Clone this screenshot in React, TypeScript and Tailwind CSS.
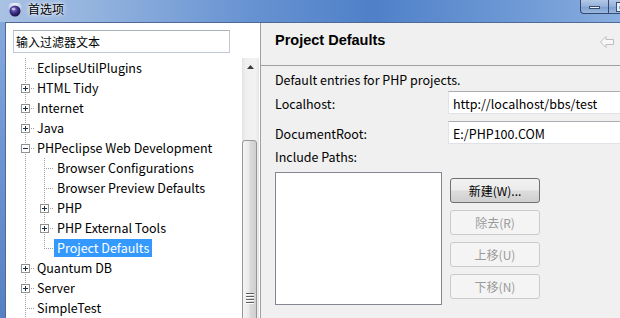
import React from "react";

type Kind = "leaf" | "plus" | "minus" | "pass" | "last";

function Connector({ kind, width }: { kind: Kind; width: number }) {
  const c = 10.5;
  const dot = "#a0a0a0";
  return (
    <svg width={width} height={20} className="block shrink-0" shapeRendering="crispEdges">
      <line x1={c} y1={0} x2={c} y2={kind === "last" ? 11 : 20} stroke={dot} strokeDasharray="1 1" />
      {(kind === "leaf" || kind === "last") && (
        <line x1={12} y1={c} x2={width} y2={c} stroke={dot} strokeDasharray="1 1" />
      )}
      {(kind === "plus" || kind === "minus") && (
        <>
          <line x1={16} y1={c} x2={width} y2={c} stroke={dot} strokeDasharray="1 1" />
          <rect x={6.5} y={6.5} width={8} height={8} fill="#ffffff" stroke="#919191" />
          <line x1={8} y1={c} x2={13} y2={c} stroke="#1c2f4a" />
          {kind === "plus" && <line x1={c} y1={8} x2={c} y2={13} stroke="#1c2f4a" />}
        </>
      )}
    </svg>
  );
}

const rows: { depth: 0 | 1; kind: Kind; label: string; selected?: boolean }[] = [
  { depth: 0, kind: "leaf", label: "EclipseUtilPlugins" },
  { depth: 0, kind: "plus", label: "HTML Tidy" },
  { depth: 0, kind: "plus", label: "Internet" },
  { depth: 0, kind: "plus", label: "Java" },
  { depth: 0, kind: "minus", label: "PHPeclipse Web Development" },
  { depth: 1, kind: "leaf", label: "Browser Configurations" },
  { depth: 1, kind: "leaf", label: "Browser Preview Defaults" },
  { depth: 1, kind: "plus", label: "PHP" },
  { depth: 1, kind: "plus", label: "PHP External Tools" },
  { depth: 1, kind: "last", label: "Project Defaults", selected: true },
  { depth: 0, kind: "plus", label: "Quantum DB" },
  { depth: 0, kind: "plus", label: "Server" },
  { depth: 0, kind: "leaf", label: "SimpleTest" },
];

function Btn({ label, primary }: { label: string; primary?: boolean }) {
  return (
    <div
      className={
        primary
          ? "flex h-[25px] w-[90px] items-center justify-center rounded-[3px] border border-[#707070] bg-[linear-gradient(180deg,#f2f2f2_0%,#ebebeb_48%,#dddddd_52%,#cfcfcf_100%)] text-[12px] text-black"
          : "flex h-[25px] w-[90px] items-center justify-center rounded-[3px] border border-[#c9cbcd] bg-[#f4f4f4] text-[12px] text-[#9a9a9a]"
      }
    >
      {label}
    </div>
  );
}

export default function App() {
  return (
    <div className="relative flex h-[318px] w-[620px] flex-col overflow-hidden font-['Noto_Sans_CJK_SC',sans-serif] text-[12.5px] text-black">
      {/* title bar */}
      <div className="flex h-[22px] shrink-0 items-start bg-[linear-gradient(90deg,#a9c1e3_0%,#93b3de_15%,#6893d2_40%,#4f80c8_60%,#709bd6_85%,#8aaee0_100%)]">
        <svg className="ml-[8px] mt-[3px] shrink-0" width="14" height="14" viewBox="0 0 14 14">
          <defs>
            <radialGradient id="sph" cx="40%" cy="35%" r="65%">
              <stop offset="0%" stopColor="#8c7fd0" />
              <stop offset="55%" stopColor="#3d2d86" />
              <stop offset="100%" stopColor="#1a1240" />
            </radialGradient>
            <radialGradient id="halo" cx="50%" cy="30%" r="60%">
              <stop offset="0%" stopColor="#ffffff" stopOpacity="0.9" />
              <stop offset="100%" stopColor="#ffffff" stopOpacity="0" />
            </radialGradient>
          </defs>
          <circle cx="7" cy="5" r="7" fill="url(#halo)" />
          <circle cx="7" cy="8" r="5.5" fill="url(#sph)" />
          <ellipse cx="5.5" cy="6" rx="2" ry="1.2" fill="#ffffff" opacity="0.55" />
        </svg>
        <span className="ml-[6px] mt-[1px] text-[12px] leading-[16px] text-black [text-shadow:0_0_6px_#ffffff,0_0_3px_#ffffff]">
          首选项
        </span>
        <div className="ml-auto mr-[-16px] flex shrink-0">
          <div className="flex h-[14px] w-[29px] items-center justify-center rounded-bl-[4px] border border-t-0 border-[#34496d] bg-[linear-gradient(180deg,#b3c8e6_0%,#93b0da_50%,#7b9dd0_51%,#9bb8e0_100%)]">
            <div className="mt-[2px] h-[3px] w-[11px] border border-[#3a4f70] bg-[#e8eef7]" />
          </div>
          <div className="flex h-[14px] w-[27px] items-center justify-center border border-l-0 border-t-0 border-[#34496d] bg-[linear-gradient(180deg,#b3c8e6_0%,#93b0da_50%,#7b9dd0_51%,#9bb8e0_100%)]">
            <div className="h-[8px] w-[10px] border-2 border-t-[3px] border-[#e8eef7] outline outline-1 outline-[#3a4f70]" />
          </div>
        </div>
      </div>

      {/* body */}
      <div className="flex min-h-0 flex-1">
        <div className="w-[5px] shrink-0 bg-[linear-gradient(180deg,#86a9dc_0%,#6f96d4_40%,#5780c4_100%)]" />
        <div className="flex min-w-0 flex-1 border-l border-t border-[#4e6b98]">
          {/* left pane */}
          <div className="flex w-[254px] shrink-0 flex-col bg-white">
            <div className="ml-[7px] mt-[7px] h-[23px] w-[217px] shrink-0 border border-[#c3c9d2] border-t-[#abb1ba] pl-[2px] text-[12px] leading-[21px]">
              输入过滤器文本
            </div>
            <div className="mt-[5px] flex min-h-0 flex-1">
              <div className="min-w-0 flex-1 overflow-hidden pl-[9px]">
                {rows.map((r) => (
                  <div key={r.label} className="flex h-[20px] items-center">
                    <Connector kind={r.depth === 0 ? r.kind : "pass"} width={19} />
                    {r.depth === 1 && <Connector kind={r.kind} width={20} />}
                    <span
                      className={
                        r.selected
                          ? "h-[18px] whitespace-nowrap bg-[#3399ff] px-[3px] leading-[18px] text-white"
                          : "h-[18px] whitespace-nowrap px-[3px] leading-[18px] text-black"
                      }
                    >
                      {r.label}
                    </span>
                  </div>
                ))}
              </div>
              {/* scrollbar */}
              <div className="mr-[1px] flex w-[17px] shrink-0 flex-col bg-[linear-gradient(90deg,#e2e2e2_0%,#efefef_20%,#f2f2f2_80%,#e6e6e6_100%)]">
                <div className="flex h-[17px] shrink-0 items-center justify-center">
                  <svg width="7" height="4" viewBox="0 0 7 4">
                    <path d="M3.5 0 L7 4 L0 4 Z" fill="#3c3c3c" />
                  </svg>
                </div>
                <div className="ml-0 mt-[65px] flex h-[316px] w-[15px] shrink-0 justify-center rounded-[3px] border border-[#969696] bg-[linear-gradient(90deg,#f4f4f4_0%,#e9e9e9_45%,#dadada_55%,#cfcfcf_100%)] pt-[152px]">
                  <svg width="8" height="11" viewBox="0 0 8 11" shapeRendering="crispEdges">
                    <rect x="0" y="0" width="8" height="1" fill="#5e5e5e" />
                    <rect x="0" y="1" width="8" height="1" fill="#ffffff" />
                    <rect x="0" y="3" width="8" height="1" fill="#5e5e5e" />
                    <rect x="0" y="4" width="8" height="1" fill="#ffffff" />
                    <rect x="0" y="6" width="8" height="1" fill="#5e5e5e" />
                    <rect x="0" y="7" width="8" height="1" fill="#ffffff" />
                    <rect x="0" y="9" width="8" height="1" fill="#5e5e5e" />
                    <rect x="0" y="10" width="8" height="1" fill="#ffffff" />
                  </svg>
                </div>
              </div>
            </div>
          </div>

          {/* right pane */}
          <div className="flex min-w-0 flex-1 flex-col border-l border-[#a0a0a0] bg-[#f0f0f0]">
            <div className="flex h-[43px] shrink-0 items-start justify-between border-b border-[#a0a0a0] pl-[14px] pr-[6px] pt-[9px]">
              <span className="font-['Liberation_Sans',Arial,sans-serif] text-[14.5px] font-bold leading-[16px] text-black">
                Project Defaults
              </span>
              <svg className="mt-[4px]" width="14" height="12" viewBox="0 0 14 12">
                <path d="M0.5 6 L6 0.5 L6 3.5 L13.5 3.5 L13.5 8.5 L6 8.5 L6 11.5 Z" fill="#f7f7f7" stroke="#bdbdbd" strokeLinejoin="round" />
              </svg>
            </div>
            <div className="flex flex-col pl-[14px] pt-[6px]">
              <div className="leading-[16px]">Default entries for PHP projects.</div>
              <div className="mt-[3px] flex h-[23px] items-center">
                <span className="w-[173px] shrink-0 pt-[2px] leading-[16px]">Localhost:</span>
                <div className="h-[23px] w-[200px] shrink-0 border border-[#dfe3e8] border-t-[#abadb3] bg-white pl-[4px] pt-[1px] leading-[21px]">
                  http://localhost/bbs/test
                </div>
              </div>
              <div className="mt-[7px] flex h-[23px] items-center">
                <span className="w-[173px] shrink-0 pt-[2px] leading-[16px]">DocumentRoot:</span>
                <div className="h-[23px] w-[200px] shrink-0 border border-[#dfe3e8] border-t-[#abadb3] bg-white pl-[4px] pt-[1px] leading-[21px]">
                  E:/PHP100.COM
                </div>
              </div>
              <div className="mt-[5px] leading-[16px]">Include Paths:</div>
              <div className="mt-[7px] flex items-start">
                <div className="h-[133px] w-[167px] shrink-0 border border-[#828790] bg-white" />
                <div className="ml-[8px] mt-[6px] flex flex-col gap-[7px]">
                  <Btn label="新建(W)..." primary />
                  <Btn label="除去(R)" />
                  <Btn label="上移(U)" />
                  <Btn label="下移(N)" />
                </div>
              </div>
            </div>
          </div>
        </div>
      </div>
    </div>
  );
}
